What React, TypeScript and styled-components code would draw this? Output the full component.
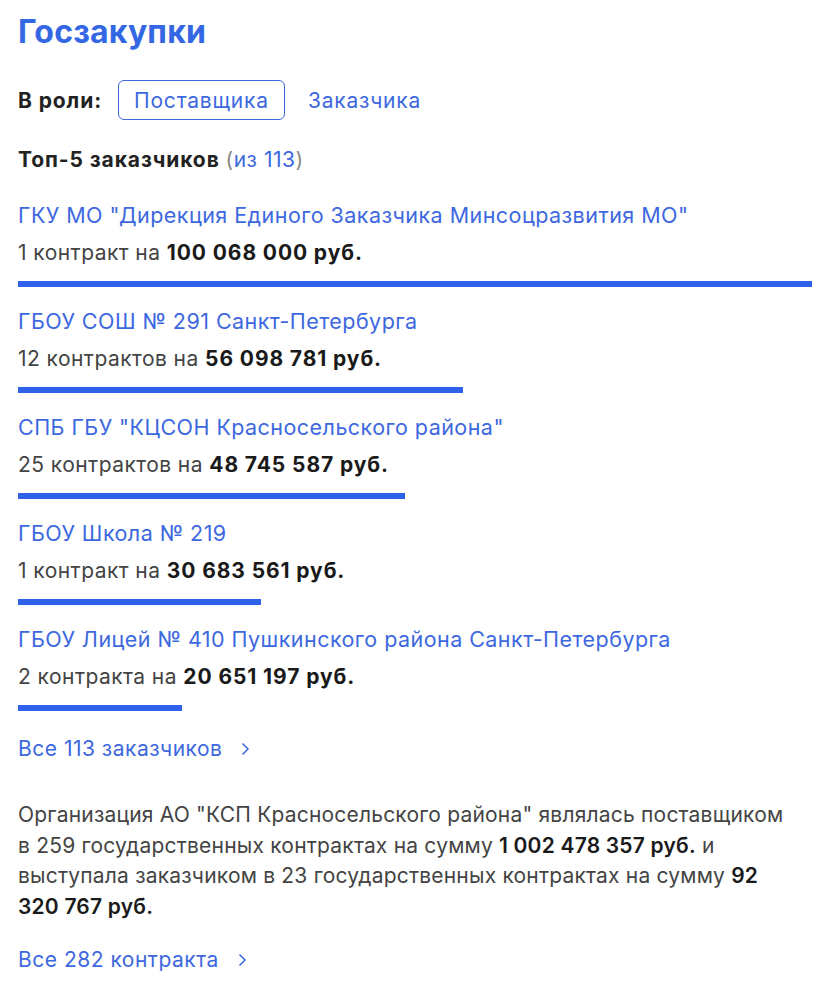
import React from "react";
import styled, { createGlobalStyle } from "styled-components";

const GlobalStyle = createGlobalStyle`
  body {
    margin: 0;
    background: #fff;
    font-family: Inter, "Noto Sans", sans-serif;
    color: #444;
  }
`;

const Page = styled.div`
  width: 794px;
  padding: 12px 9px 8px 18px;
`;

const Title = styled.h1`
  margin: 0;
  font-size: 32px;
  line-height: 40px;
  font-weight: 700;
  letter-spacing: 0.2px;
  color: #3467e3;
`;

const RoleRow = styled.div`
  display: flex;
  align-items: center;
  margin-top: 28px;
  height: 40px;
`;

const RoleLabel = styled.span`
  font-size: 21px;
  font-weight: 700;
  letter-spacing: 0.9px;
  color: #222;
  margin-right: 16px;
`;

const RoleTab = styled.button<{ $active?: boolean }>`
  height: 40px;
  padding: 0 15px;
  margin-right: 7px;
  border: 1px solid ${(p) => (p.$active ? "#3d68df" : "transparent")};
  border-radius: 6px;
  background: #fff;
  font-family: inherit;
  font-size: 21px;
  letter-spacing: 0.8px;
  color: #3d68df;
  cursor: pointer;
`;

const TopHeading = styled.div`
  margin-top: 25px;
  font-size: 21px;
  line-height: 30px;
  font-weight: 700;
  letter-spacing: 0.9px;
  color: #222;

  span {
    font-weight: 400;
    letter-spacing: 0.5px;
    color: #888;
  }

  a {
    color: #3d68df;
    text-decoration: none;
  }
`;

const List = styled.ul`
  list-style: none;
  margin: 25px 0 0;
  padding: 0;
`;

const Item = styled.li`
  margin-bottom: 19px;
`;

const Name = styled.a`
  display: block;
  font-size: 21.5px;
  line-height: 30px;
  letter-spacing: 0.45px;
  color: #3d68df;
  text-decoration: none;
`;

const Amount = styled.div`
  margin-top: 8px;
  font-size: 21px;
  line-height: 30px;
  letter-spacing: 0.45px;
  color: #444;

  b {
    font-weight: 700;
    letter-spacing: 0.9px;
    color: #1a1a1a;
  }
`;

const Bar = styled.div`
  margin-top: 13px;
  height: 6px;
  background: #2f62ea;
`;

const MoreLink = styled.a<{ $top: number }>`
  display: inline-flex;
  align-items: center;
  gap: 19px;
  margin-top: ${(p) => p.$top}px;
  font-size: 21px;
  line-height: 30px;
  letter-spacing: 0.5px;
  color: #3d68df;
  text-decoration: none;

  svg {
    width: 9px;
    height: 14px;
  }
`;

const Summary = styled.p`
  max-width: 780px;
  margin: 36px 0 0;
  font-size: 21px;
  line-height: 30.5px;
  letter-spacing: 0.2px;
  color: #444;

  b {
    font-weight: 600;
    color: #1a1a1a;
  }
`;

const customers = [
  { name: 'ГКУ МО "Дирекция Единого Заказчика Минсоцразвития МО"', count: "1 контракт", sum: 100068000 },
  { name: "ГБОУ СОШ № 291 Санкт-Петербурга", count: "12 контрактов", sum: 56098781 },
  { name: 'СПБ ГБУ "КЦСОН Красносельского района"', count: "25 контрактов", sum: 48745587 },
  { name: "ГБОУ Школа № 219", count: "1 контракт", sum: 30683561 },
  { name: "ГБОУ Лицей № 410 Пушкинского района Санкт-Петербурга", count: "2 контракта", sum: 20651197 },
];

const fmt = (n: number) => n.toString().replace(/\B(?=(\d{3})+(?!\d))/g, " ");

const Chevron = () => (
  <svg viewBox="0 0 9 14" fill="none">
    <polyline points="1.5,1.5 7,7 1.5,12.5" stroke="#3d68df" strokeWidth="1.5" />
  </svg>
);

const App = () => {
  const max = customers[0].sum;
  return (
    <Page>
      <GlobalStyle />
      <Title>Госзакупки</Title>
      <RoleRow>
        <RoleLabel>В роли:</RoleLabel>
        <RoleTab $active>Поставщика</RoleTab>
        <RoleTab>Заказчика</RoleTab>
      </RoleRow>
      <TopHeading>
        Топ-5 заказчиков{" "}
        <span>
          (<a href="#">из 113</a>)
        </span>
      </TopHeading>
      <List>
        {customers.map((c) => (
          <Item key={c.name}>
            <Name href="#">{c.name}</Name>
            <Amount>
              {c.count} на <b>{fmt(c.sum)} руб.</b>
            </Amount>
            <Bar style={{ width: `${(c.sum / max) * 100}%` }} />
          </Item>
        ))}
      </List>
      <MoreLink href="#" $top={4}>
        Все 113 заказчиков <Chevron />
      </MoreLink>
      <Summary>
        Организация АО "КСП Красносельского района" являлась поставщиком в 259 государственных контрактах на
        сумму <b>1 002 478 357 руб.</b> и выступала заказчиком в 23 государственных контрактах на сумму{" "}
        <b>92 320 767 руб.</b>
      </Summary>
      <MoreLink href="#" $top={23}>
        Все 282 контракта <Chevron />
      </MoreLink>
    </Page>
  );
};

export default App;
